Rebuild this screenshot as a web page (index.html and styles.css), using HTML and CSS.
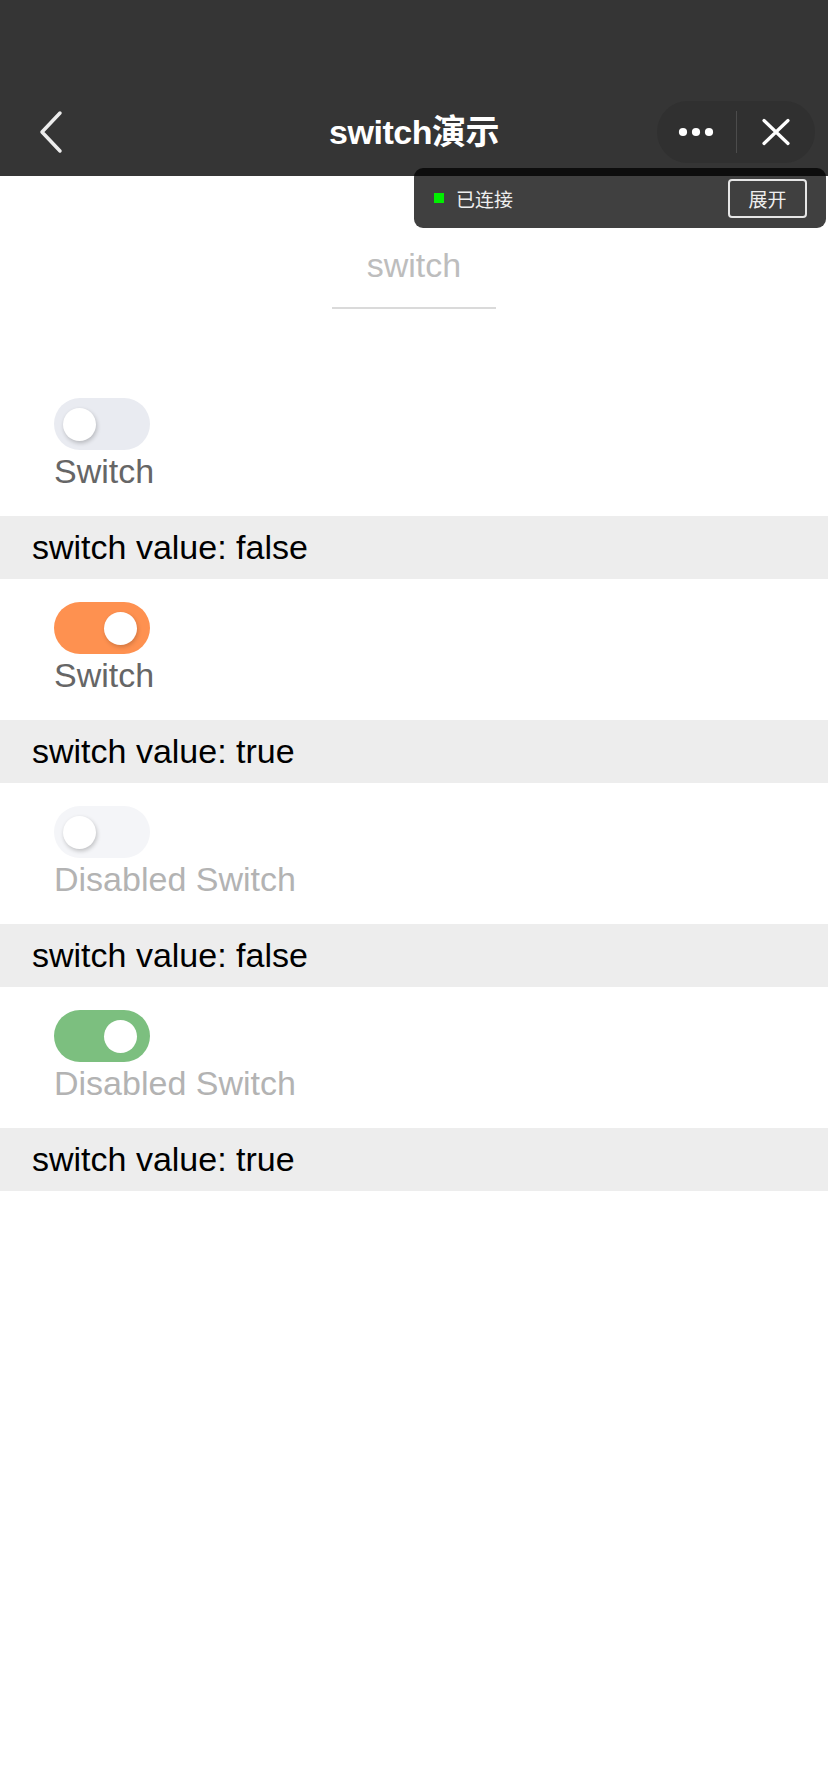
FILE: index.html
```html
<!DOCTYPE html>
<html lang="zh-CN">
<head>
<meta charset="utf-8">
<title>switch演示</title>
<link rel="stylesheet" href="styles.css">
</head>
<body>
<header class="topbar">
  <div class="statusbar"></div>
  <nav class="navbar">
    <div class="nav-left">
      <svg class="back" width="24" height="44" viewBox="0 0 24 44" aria-hidden="true">
        <polyline points="21,3 3,22 21,41" fill="none" stroke="#ececec" stroke-width="3.5" stroke-linecap="round" stroke-linejoin="round"/>
      </svg>
    </div>
    <div class="nav-title">switch演示</div>
    <div class="nav-right">
      <div class="capsule">
        <div class="cap-btn">
          <svg width="36" height="10" viewBox="0 0 36 10" aria-hidden="true">
            <circle cx="5" cy="5" r="4.1" fill="#fff"/>
            <circle cx="18" cy="5" r="4.1" fill="#fff"/>
            <circle cx="31" cy="5" r="4.1" fill="#fff"/>
          </svg>
        </div>
        <div class="cap-divider"></div>
        <div class="cap-btn">
          <svg width="28" height="28" viewBox="0 0 28 28" aria-hidden="true">
            <path d="M2 2.5 L26 25.5 M26 2.5 L2 25.5" stroke="#fff" stroke-width="3.2" stroke-linecap="round" fill="none"/>
          </svg>
        </div>
      </div>
    </div>
  </nav>
</header>

<div class="debug-panel">
  <span class="dot"></span>
  <span class="debug-text">已连接</span>
  <span class="debug-btn">展开</span>
</div>

<main class="page">
  <div class="title-wrap"><span class="title">switch</span></div>

  <div class="list">
    <section class="item">
      <div class="toggle off"><span class="knob"></span></div>
      <div class="label">Switch</div>
    </section>
    <div class="band">switch value: false</div>

    <section class="item">
      <div class="toggle on"><span class="knob"></span></div>
      <div class="label">Switch</div>
    </section>
    <div class="band">switch value: true</div>

    <section class="item">
      <div class="toggle off disabled"><span class="knob"></span></div>
      <div class="label disabled-label">Disabled Switch</div>
    </section>
    <div class="band">switch value: false</div>

    <section class="item">
      <div class="toggle on disabled"><span class="knob"></span></div>
      <div class="label disabled-label">Disabled Switch</div>
    </section>
    <div class="band">switch value: true</div>
  </div>
</main>
</body>
</html>
```

FILE: styles.css
```css
html, body {
  margin: 0;
  padding: 0;
  background: #ffffff;
}

body {
  font-family: "Liberation Sans", "Noto Sans CJK SC", sans-serif;
  color: #000;
  min-height: 1792px;
  position: relative;
}

.topbar {
  background: #353535;
  height: 176px;
}

.statusbar {
  height: 88px;
}

.navbar {
  height: 88px;
  display: grid;
  grid-template-columns: 1fr auto 1fr;
  align-items: center;
}

.nav-left {
  display: flex;
  align-items: center;
  padding-left: 39px;
}

.back {
  display: block;
}

.nav-title {
  color: #ffffff;
  font-size: 34px;
  font-weight: 600;
  line-height: 44px;
  text-align: center;
  letter-spacing: -0.5px;
}

.nav-right {
  display: flex;
  justify-content: flex-end;
  padding-right: 13px;
}

.capsule {
  width: 158px;
  height: 62px;
  border-radius: 31px;
  background: #303030;
  display: flex;
  align-items: center;
}

.cap-btn {
  flex: 1;
  display: flex;
  align-items: center;
  justify-content: center;
  height: 100%;
}

.cap-btn svg {
  display: block;
}

.cap-divider {
  width: 1px;
  height: 42px;
  background: #4c4c4c;
}

.debug-panel {
  position: absolute;
  top: 168px;
  left: 414px;
  width: 412px;
  height: 60px;
  box-sizing: border-box;
  background: rgba(0, 0, 0, 0.75);
  border-radius: 9px;
  display: flex;
  align-items: center;
  padding: 0 19px 0 20px;
}

.dot {
  width: 10px;
  height: 10px;
  background: #00ee00;
  margin-right: 12px;
}

.debug-text {
  color: #eeeeee;
  font-size: 19px;
  flex: 1;
}

.debug-btn {
  color: #eeeeee;
  font-size: 19px;
  border: 2px solid #e6e6e6;
  border-radius: 4px;
  width: 79px;
  height: 39px;
  box-sizing: border-box;
  display: flex;
  align-items: center;
  justify-content: center;
}

.page {
  padding-top: 65px;
}

.title-wrap {
  text-align: center;
}

.title {
  display: inline-block;
  width: 164px;
  font-size: 34px;
  line-height: 48px;
  color: #bdbdbd;
  padding-bottom: 18px;
  border-bottom: 2px solid #dadada;
}

.list {
  margin-top: 66px;
}

.item {
  padding: 23px 32px 24px 54px;
}

.toggle {
  position: relative;
  width: 96px;
  height: 52px;
  border-radius: 26px;
  background: #e9ebf1;
}

.toggle.off.disabled {
  background: #f4f5f8;
}

.toggle.on {
  background: #fe9150;
}

.toggle.on.disabled {
  background: #7cbf7f;
}

.knob {
  position: absolute;
  top: 10px;
  left: 9px;
  width: 33px;
  height: 33px;
  border-radius: 50%;
  background: #ffffff;
  box-shadow: 1px 2px 4px rgba(0, 0, 0, 0.22);
}

.toggle.on .knob {
  left: 50px;
  top: 10px;
  box-shadow: 1px 2px 4px rgba(0, 0, 0, 0.18);
}

.toggle.on.disabled .knob {
  box-shadow: none;
}

.label {
  font-size: 34px;
  line-height: 42px;
  color: #666666;
}

.disabled-label {
  color: #b3b3b3;
}

.band {
  background: #ededed;
  height: 63px;
  line-height: 63px;
  font-size: 34px;
  padding-left: 32px;
  color: #000000;
}
```
